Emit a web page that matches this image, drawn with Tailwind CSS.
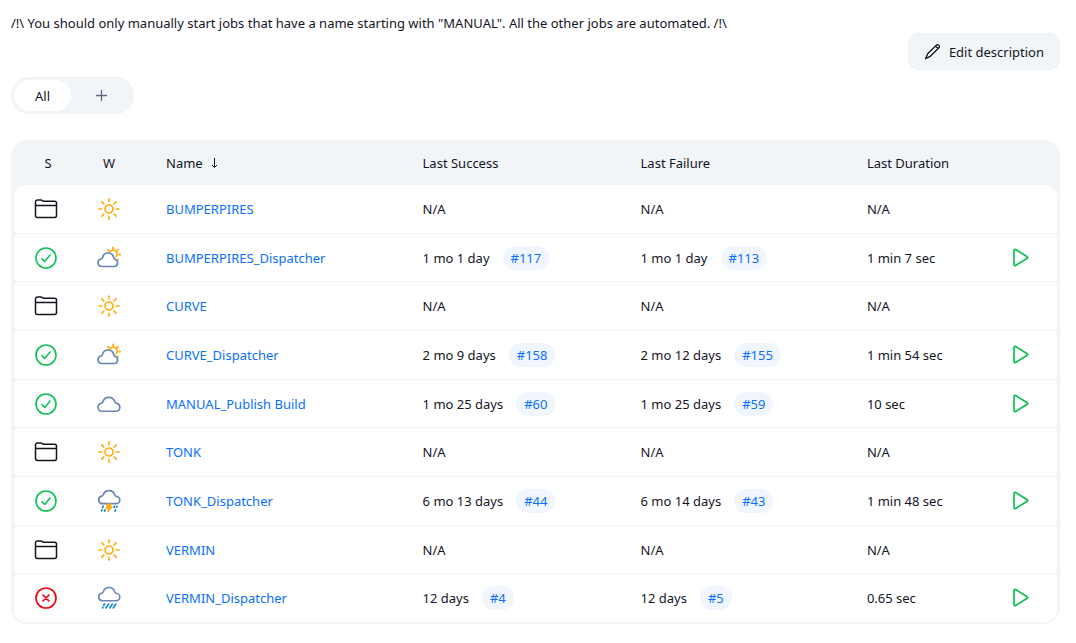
<!DOCTYPE html>
<html lang="en">
<head>
<meta charset="utf-8">
<meta name="viewport" content="width=device-width, initial-scale=1">
<title>Jobs</title>
<script src="https://cdn.jsdelivr.net/npm/@tailwindcss/browser@4"></script>
</head>
<body class="bg-white font-['Noto_Sans','Open_Sans',sans-serif] text-[13px] leading-5 text-[#14141f]">
<svg class="hidden" aria-hidden="true">
  <symbol id="folder" viewBox="0 0 24 24" fill="none" stroke="#14141f" stroke-width="1.5" stroke-linejoin="round">
    <path d="M1.500 18.400V5a2 2 0 0 1 2-2h3.400c.5 0 1 .2 1.400.5l.5.3c.4.300.9.400 1.400.400H20.500a2 2 0 0 1 2 2v12.200a2 2 0 0 1-2 2H3.500a2 2 0 0 1-2-2zM1.500 8.500h21"/>
  </symbol>
  <symbol id="success" viewBox="0 0 24 24" fill="none" stroke="#0dc154" stroke-width="1.600" stroke-linecap="round" stroke-linejoin="round">
    <circle cx="12" cy="12" r="10"/><path d="M8 12.700l2.700 2.700L16 9"/>
  </symbol>
  <symbol id="failed" viewBox="0 0 24 24" fill="none" stroke="#f5040c" stroke-width="1.700" stroke-linecap="round">
    <circle cx="12" cy="12" r="10"/><path d="M9 9l6 6M15 9l-6 6"/>
  </symbol>
  <symbol id="sun" viewBox="0 0 24 24" fill="none" stroke="#ffad0d" stroke-width="1.700" stroke-linecap="round">
    <circle cx="12" cy="12" r="4"/><path d="M12 2v2.600M12 19.400V22M2 12h2.600M19.400 12H22M4.900 4.900l1.900 1.900M17.200 17.200l1.900 1.900M4.900 19.100l1.900-1.900M17.200 6.800l1.900-1.900"/>
  </symbol>
  <symbol id="cloud" viewBox="0 0 24 24" fill="none" stroke="#6a86b4" stroke-width="1.600" stroke-linejoin="round">
    <path d="M4.800 19.300a4.100 4.100 0 0 1-.5-8.100c.9-.2 1.200-.5 1.500-1.300a6.300 6.300 0 0 1 12-.2c.3 1.100.7 1.500 1.800 1.700a4 4 0 0 1-.4 7.900z"/>
  </symbol>
  <symbol id="partly" viewBox="0 0 24 24" fill="none" stroke-width="1.700" stroke-linecap="round" stroke-linejoin="round">
    <path stroke="#ffad0d" d="M13 6.200a3.800 3.800 0 1 1 6.200 4.300M16 1.300v1.500M21.100 3.700l-1 1M22 8.600h1.400M10.900 3.700l1 1M20.900 13.300l.2.200"/>
    <path stroke="#6a86b4" d="M4.600 20.500a3.800 3.800 0 0 1-.6-7.500c1-.2 1.300-.5 1.500-1.400a5.700 5.700 0 0 1 11.200.1c.2 1 .6 1.400 1.600 1.700a3.700 3.700 0 0 1-.9 7.100z"/>
  </symbol>
  <symbol id="storm" viewBox="0 0 24 24" fill="none" stroke-width="1.700" stroke-linecap="round" stroke-linejoin="round">
    <path stroke="#6a86b4" d="M5.200 14.700a3.800 3.800 0 0 1-.5-7.500c.9-.2 1.200-.4 1.500-1.200a6 6 0 0 1 11.600 0c.3.900.7 1.200 1.500 1.300a3.700 3.700 0 0 1-.5 7.400z"/>
    <path stroke="#1289d4" d="M6.200 17.300l-.7 1.200M4.900 21l-.5.900M8.200 20.900l-.6 1.200M17.600 17.300l-.7 1.200M20 17.300l-.5.900M18.600 20.900l-.6 1.200"/>
    <path fill="#ffad0d" stroke="#ffad0d" stroke-width="1.200" d="M10.400 15.200h3.500l-.8 2.500h2l-4.300 5.100.6-3.500H9.300z"/>
  </symbol>
  <symbol id="rain" viewBox="0 0 24 24" fill="none" stroke-width="1.600" stroke-linecap="round" stroke-linejoin="round">
    <path stroke="#6a86b4" d="M5.200 14.700a3.800 3.800 0 0 1-.5-7.500c.9-.2 1.200-.4 1.500-1.200a6 6 0 0 1 11.600 0c.3.900.7 1.200 1.500 1.300a3.700 3.700 0 0 1-.5 7.400z"/>
    <path stroke="#1289d4" d="M7.600 18l-.9 1.300M6 21.200l-.5.8M11.600 18L9 22M15.400 18l-2.600 4M18.800 18l-2.600 4"/>
  </symbol>
  <symbol id="play" viewBox="0 0 24 24" fill="none" stroke="#0dc154" stroke-width="1.700" stroke-linejoin="round">
    <path d="M5 4.400v14.200c0 .9.800 1.300 1.500.9l11.700-7.200c.7-.4.700-1.200 0-1.600L6.500 3.500c-.7-.4-1.500 0-1.500.9z"/>
  </symbol>
</svg>

<main class="pt-[13px] pr-4 pl-[11px]">
  <p>/!\ You should only manually start jobs that have a name starting with "MANUAL". All the other jobs are automated. /!\</p>
  <div class="flex justify-end">
    <button type="button" class="flex h-[37px] items-center gap-2 rounded-[10px] border border-[#edf2f6] bg-[#f1f5f8] px-[15px]">
      <svg class="size-[17px]" viewBox="0 0 17 17" fill="none" stroke="#14141f" stroke-width="1.300" stroke-linecap="round" stroke-linejoin="round" aria-hidden="true"><path d="M12.300 2.200a1.800 1.800 0 0 1 2.600 2.500L6.300 13.300 1.500 15.700l2.200-4.900zM11.600 3.100l2.400 2.400"/></svg>
      Edit description
    </button>
  </div>
  <nav class="mt-[7px] flex h-[37px] w-fit items-center rounded-full border border-[#edf2f6] bg-[#f1f5f8] px-0.5" aria-label="Views">
    <a href="#all" aria-current="page" class="flex h-[31px] w-[57px] items-center justify-center rounded-full bg-white">All</a>
    <a href="#new" aria-label="New view" class="flex h-[31px] w-[60px] items-center justify-center rounded-full">
      <svg class="size-[13px]" viewBox="0 0 13 13" stroke="#5f6b85" stroke-width="1.300" stroke-linecap="round" aria-hidden="true"><path d="M6.500 1.500v10M1.500 6.500h10"/></svg>
    </a>
  </nav>

  <div class="mt-[26px] rounded-[16px] bg-[#f1f5f8] px-[3px] pb-px">
    <table class="w-full table-fixed border-separate border-spacing-x-0 border-spacing-y-px text-left [&_tbody_td]:bg-white [&_td:first-child]:rounded-l-[4px] [&_td:last-child]:rounded-r-[4px] [&_tbody_tr:first-child_td:first-child]:rounded-tl-[12px] [&_tbody_tr:first-child_td:last-child]:rounded-tr-[12px] [&_tbody_tr:last-child_td:first-child]:rounded-bl-[12px] [&_tbody_tr:last-child_td:last-child]:rounded-br-[12px] [&_td_svg]:mx-auto [&_th]:font-normal [&_td_a]:text-[#0b6fff]">
      <colgroup>
        <col class="w-16"><col class="w-[62px]"><col class="w-[24.6%]"><col class="w-[20.9%]"><col class="w-[21.7%]"><col><col class="w-[72px]">
      </colgroup>
      <thead>
        <tr class="h-[43px]">
          <th scope="col" class="pl-1 text-center">S</th>
          <th scope="col" class="text-center">W</th>
          <th scope="col" class="pl-[26px]"><a href="#sort" class="flex items-center gap-2">Name
            <svg class="h-2.5 w-[7px]" viewBox="0 0 7 10" fill="none" stroke="#14141f" stroke-width="1" aria-hidden="true"><path d="M3.500 0v9M1 7l2.500 2.500L6 7"/></svg></a></th>
          <th scope="col" class="pl-[26px]">Last Success</th>
          <th scope="col" class="pl-[26px]">Last Failure</th>
          <th scope="col" class="pl-[26px]">Last Duration</th>
          <td></td>
        </tr>
      </thead>
      <tbody>
        <tr class="h-12">
          <td><svg class="size-6" role="img" aria-label="Folder"><use href="#folder"/></svg></td>
          <td><svg class="size-6" role="img" aria-label="Sunny"><use href="#sun"/></svg></td>
          <td class="pl-[26px]"><a href="#j1">BUMPERPIRES</a></td>
          <td class="pl-[26px]">N/A</td><td class="pl-[26px]">N/A</td><td class="pl-[26px]">N/A</td><td></td>
        </tr>
        <tr class="h-[47px]">
          <td><svg class="size-6" role="img" aria-label="Success"><use href="#success"/></svg></td>
          <td><svg class="size-6" role="img" aria-label="Partly cloudy"><use href="#partly"/></svg></td>
          <td class="pl-[26px]"><a href="#j2">BUMPERPIRES_Dispatcher</a></td>
          <td class="pl-[26px]">1 mo 1 day<a href="#b117" class="ml-[13px] inline-block h-6 rounded-full bg-[#f1f6fe] px-2 leading-6">#117</a></td>
          <td class="pl-[26px]">1 mo 1 day<a href="#b113" class="ml-[13px] inline-block h-6 rounded-full bg-[#f1f6fe] px-2 leading-6">#113</a></td>
          <td class="pl-[26px]">1 min 7 sec</td>
          <td><button type="button" aria-label="Build BUMPERPIRES_Dispatcher" class="mx-auto block"><svg class="size-6"><use href="#play"/></svg></button></td>
        </tr>
        <tr class="h-12">
          <td><svg class="size-6" role="img" aria-label="Folder"><use href="#folder"/></svg></td>
          <td><svg class="size-6" role="img" aria-label="Sunny"><use href="#sun"/></svg></td>
          <td class="pl-[26px]"><a href="#j3">CURVE</a></td>
          <td class="pl-[26px]">N/A</td><td class="pl-[26px]">N/A</td><td class="pl-[26px]">N/A</td><td></td>
        </tr>
        <tr class="h-12">
          <td><svg class="size-6" role="img" aria-label="Success"><use href="#success"/></svg></td>
          <td><svg class="size-6" role="img" aria-label="Partly cloudy"><use href="#partly"/></svg></td>
          <td class="pl-[26px]"><a href="#j4">CURVE_Dispatcher</a></td>
          <td class="pl-[26px]">2 mo 9 days<a href="#b158" class="ml-[13px] inline-block h-6 rounded-full bg-[#f1f6fe] px-2 leading-6">#158</a></td>
          <td class="pl-[26px]">2 mo 12 days<a href="#b155" class="ml-[13px] inline-block h-6 rounded-full bg-[#f1f6fe] px-2 leading-6">#155</a></td>
          <td class="pl-[26px]">1 min 54 sec</td>
          <td><button type="button" aria-label="Build CURVE_Dispatcher" class="mx-auto block"><svg class="size-6"><use href="#play"/></svg></button></td>
        </tr>
        <tr class="h-[47px]">
          <td><svg class="size-6" role="img" aria-label="Success"><use href="#success"/></svg></td>
          <td><svg class="size-6" role="img" aria-label="Cloudy"><use href="#cloud"/></svg></td>
          <td class="pl-[26px]"><a href="#j5">MANUAL_Publish Build</a></td>
          <td class="pl-[26px]">1 mo 25 days<a href="#b60" class="ml-[13px] inline-block h-6 rounded-full bg-[#f1f6fe] px-2 leading-6">#60</a></td>
          <td class="pl-[26px]">1 mo 25 days<a href="#b59" class="ml-[13px] inline-block h-6 rounded-full bg-[#f1f6fe] px-2 leading-6">#59</a></td>
          <td class="pl-[26px]">10 sec</td>
          <td><button type="button" aria-label="Build MANUAL_Publish Build" class="mx-auto block"><svg class="size-6"><use href="#play"/></svg></button></td>
        </tr>
        <tr class="h-12">
          <td><svg class="size-6" role="img" aria-label="Folder"><use href="#folder"/></svg></td>
          <td><svg class="size-6" role="img" aria-label="Sunny"><use href="#sun"/></svg></td>
          <td class="pl-[26px]"><a href="#j6">TONK</a></td>
          <td class="pl-[26px]">N/A</td><td class="pl-[26px]">N/A</td><td class="pl-[26px]">N/A</td><td></td>
        </tr>
        <tr class="h-12">
          <td><svg class="size-6" role="img" aria-label="Success"><use href="#success"/></svg></td>
          <td><svg class="size-6" role="img" aria-label="Storm"><use href="#storm"/></svg></td>
          <td class="pl-[26px]"><a href="#j7">TONK_Dispatcher</a></td>
          <td class="pl-[26px]">6 mo 13 days<a href="#b44" class="ml-[13px] inline-block h-6 rounded-full bg-[#f1f6fe] px-2 leading-6">#44</a></td>
          <td class="pl-[26px]">6 mo 14 days<a href="#b43" class="ml-[13px] inline-block h-6 rounded-full bg-[#f1f6fe] px-2 leading-6">#43</a></td>
          <td class="pl-[26px]">1 min 48 sec</td>
          <td><button type="button" aria-label="Build TONK_Dispatcher" class="mx-auto block"><svg class="size-6"><use href="#play"/></svg></button></td>
        </tr>
        <tr class="h-[47px]">
          <td><svg class="size-6" role="img" aria-label="Folder"><use href="#folder"/></svg></td>
          <td><svg class="size-6" role="img" aria-label="Sunny"><use href="#sun"/></svg></td>
          <td class="pl-[26px]"><a href="#j8">VERMIN</a></td>
          <td class="pl-[26px]">N/A</td><td class="pl-[26px]">N/A</td><td class="pl-[26px]">N/A</td><td></td>
        </tr>
        <tr class="h-12">
          <td><svg class="size-6" role="img" aria-label="Failed"><use href="#failed"/></svg></td>
          <td><svg class="size-6" role="img" aria-label="Rain"><use href="#rain"/></svg></td>
          <td class="pl-[26px]"><a href="#j9">VERMIN_Dispatcher</a></td>
          <td class="pl-[26px]">12 days<a href="#b4" class="ml-[13px] inline-block h-6 rounded-full bg-[#f1f6fe] px-2 leading-6">#4</a></td>
          <td class="pl-[26px]">12 days<a href="#b5" class="ml-[13px] inline-block h-6 rounded-full bg-[#f1f6fe] px-2 leading-6">#5</a></td>
          <td class="pl-[26px]">0.65 sec</td>
          <td><button type="button" aria-label="Build VERMIN_Dispatcher" class="mx-auto block"><svg class="size-6"><use href="#play"/></svg></button></td>
        </tr>
      </tbody>
    </table>
  </div>
</main>
</body>
</html>
